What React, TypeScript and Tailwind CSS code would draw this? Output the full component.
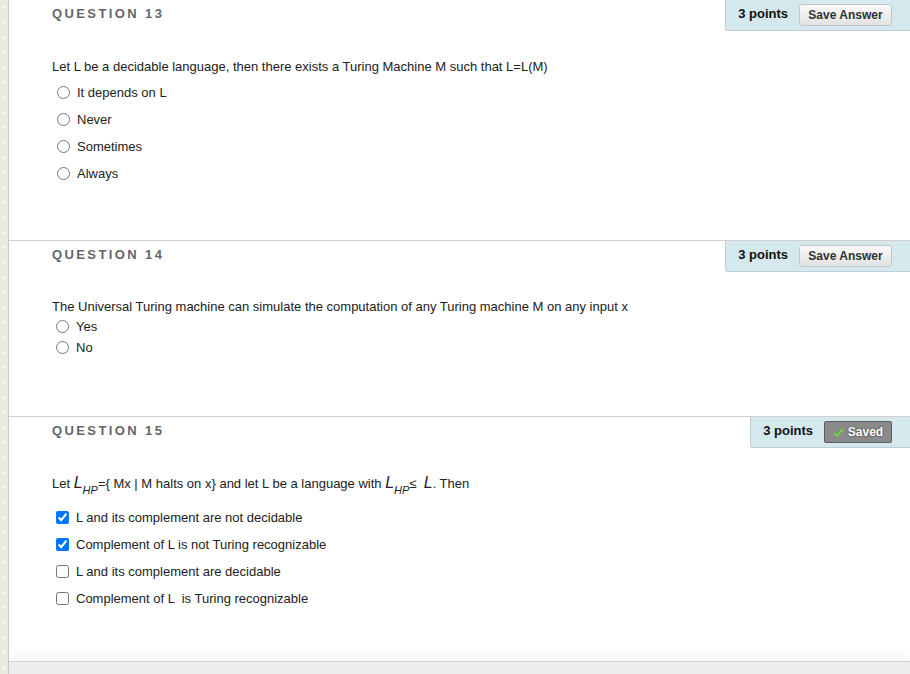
import React from "react";

const font = { fontFamily: '"Liberation Sans", Arial, sans-serif' };

function SideStrip() {
  return (
    <div className="w-[9px] shrink-0 bg-[#ebe8df] border-r border-[#c9c9c9]">
      <svg width="9" height="100%" className="block h-full">
        <defs>
          <pattern id="plus" width="9" height="15" patternUnits="userSpaceOnUse">
            <path d="M2 7.5h5M4.5 5v5" stroke="#f6f4ef" strokeWidth="1.6" />
          </pattern>
        </defs>
        <rect width="9" height="100%" fill="url(#plus)" />
      </svg>
    </div>
  );
}

function SaveButton() {
  return (
    <button className="h-[22px] w-[93px] shrink-0 rounded-[3px] border border-[#c6c6c6] bg-gradient-to-b from-[#fafafa] to-[#e2e2e2] text-[12px] font-bold text-[#333]">
      Save Answer
    </button>
  );
}

function SavedButton() {
  return (
    <button className="flex h-[22px] w-[68px] shrink-0 items-center justify-center gap-[4px] rounded-[2px] border border-[#5e5e5e] bg-[#8a8a8a] text-[12px] font-bold text-white [text-shadow:0_0_2px_#333]">
      <svg width="11" height="9" viewBox="0 0 11 9">
        <path d="M1 5l3 3 6-7" fill="none" stroke="#6fd43a" strokeWidth="2" />
      </svg>
      Saved
    </button>
  );
}

function Header({ n, saved }: { n: number; saved?: boolean }) {
  return (
    <div className="flex h-[31px] items-start justify-between">
      <div className="pl-[43px] pt-[6px] text-[13px] font-bold leading-[16px] tracking-[2.4px] text-[#666]">
        QUESTION {n}
      </div>
      <div className="flex h-[31px] items-center gap-[11px] rounded-bl-[3px] border-b border-l border-[#bcd0d6] bg-[#d4e8ee] pl-[12px] pr-[18px]">
        <span className="-mt-[3px] whitespace-nowrap text-[13px] font-bold text-[#111]">3 points</span>
        {saved ? <SavedButton /> : <SaveButton />}
      </div>
    </div>
  );
}

function Radio({ label, tight }: { label: string; tight?: boolean }) {
  return (
    <label className={`flex items-center ${tight ? "h-[21px] pl-[47px] gap-[7px]" : "h-[27px] pl-[48px] gap-[7px]"}`}>
      <input type="radio" name={label} className="m-0 h-[13px] w-[13px]" />
      <span>{label}</span>
    </label>
  );
}

function Check({ label, checked }: { label: string; checked?: boolean }) {
  return (
    <label className="flex h-[27px] items-center gap-[7px] pl-[47px]">
      <input type="checkbox" defaultChecked={checked} className="m-0 h-[13px] w-[13px]" />
      <span className="whitespace-pre">{label}</span>
    </label>
  );
}

function MathL({ sub }: { sub?: string }) {
  return (
    <span className="italic">
      <span className="text-[16px] font-light">L</span>
      {sub && <sub className="text-[11px] italic align-[-3px]">{sub}</sub>}
    </span>
  );
}

export default function App() {
  return (
    <div className="flex h-[674px] w-[910px] overflow-hidden bg-white text-[13px] leading-[16px] text-[#222]" style={font}>
      <SideStrip />
      <div className="flex flex-1 flex-col">
        {/* Question 13 */}
        <section className="h-[241px] shrink-0 border-b border-[#cfcfcf]">
          <Header n={13} />
          <p className="mt-[28px] pl-[43px]">
            Let L be a decidable language, then there exists a Turing Machine M such that L=L(M)
          </p>
          <div className="mt-[4px]">
            <Radio label="It depends on L" />
            <Radio label="Never" />
            <Radio label="Sometimes" />
            <Radio label="Always" />
          </div>
        </section>

        {/* Question 14 */}
        <section className="h-[176px] shrink-0 border-b border-[#cfcfcf]">
          <Header n={14} />
          <p className="mt-[27px] pl-[43px]">
            The Universal Turing machine can simulate the computation of any Turing machine M on any input x
          </p>
          <div className="mt-[1px]">
            <Radio label="Yes" tight />
            <Radio label="No" tight />
          </div>
        </section>

        {/* Question 15 */}
        <section className="shrink-0">
          <Header n={15} saved />
          <p className="mt-[27px] h-[16px] whitespace-nowrap pl-[43px]">
            Let <MathL sub="HP" />={"{"} Mx | M halts on x{"}"} and let L be a language with <MathL sub="HP" />≤&nbsp; <MathL />. Then
          </p>
          <div className="mt-[13px]">
            <Check label="L and its complement are not decidable" checked />
            <Check label="Complement of L is not Turing recognizable" checked />
            <Check label="L and its complement are decidable" />
            <Check label="Complement of L  is Turing recognizable" />
          </div>
        </section>

        <div className="flex-1" />
        <div className="h-[13px] shrink-0 border-t border-[#d2d2d2] bg-[#ededed] shadow-[0_-6px_10px_rgba(0,0,0,0.04)]" />
      </div>
    </div>
  );
}
